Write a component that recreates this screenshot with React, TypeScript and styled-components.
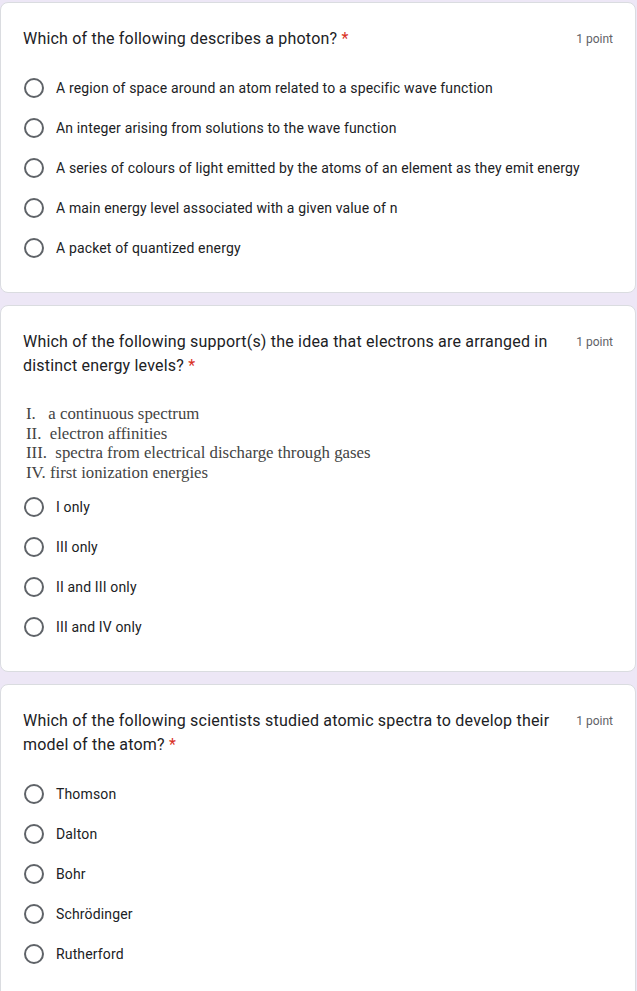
import styled, { createGlobalStyle } from 'styled-components';

type Question = {
  title: string,
  statements?: string[],
  options: string[],
};

const questions: Question[] = [
  {
    title: 'Which of the following describes a photon?',
    options: [
      'A region of space around an atom related to a specific wave function',
      'An integer arising from solutions to the wave function',
      'A series of colours of light emitted by the atoms of an element as they emit energy',
      'A main energy level associated with a given value of n',
      'A packet of quantized energy',
    ],
  },
  {
    title: 'Which of the following support(s) the idea that electrons are arranged in distinct energy levels?',
    statements: [
      'I.   a continuous spectrum',
      'II.  electron affinities',
      'III.  spectra from electrical discharge through gases',
      'IV. first ionization energies',
    ],
    options: ['I only', 'III only', 'II and III only', 'III and IV only'],
  },
  {
    title: 'Which of the following scientists studied atomic spectra to develop their model of the atom?',
    options: ['Thomson', 'Dalton', 'Bohr', 'Schrödinger', 'Rutherford'],
  },
];

const GlobalStyle = createGlobalStyle`
  body {
    margin: 0;
    background: #ede7f6;
    font-family: Roboto, "Liberation Sans", Arial, sans-serif;
    color: #202124;
  }
`;

const Page = styled.div`
  display: flex;
  flex-direction: column;
  gap: 12px;
  padding: 2px 1px 0 0;
`;

const Card = styled.section`
  background: #fff;
  border: 1px solid #dadce0;
  border-radius: 8px;
  padding: 24px 22px 24px 22px;
`;

const Header = styled.div`
  display: flex;
  justify-content: space-between;
  align-items: flex-start;
  gap: 24px;
`;

const Title = styled.div`
  font-size: 16px;
  line-height: 24px;
  letter-spacing: 0.2px;
  max-width: 540px;
`;

const Required = styled.span`
  color: #d93025;
`;

const Points = styled.div`
  font-size: 12px;
  line-height: 24px;
  color: #5f6368;
  white-space: nowrap;
`;

const Statements = styled.div`
  margin-top: 26px;
  padding-left: 3px;
  font-family: "Liberation Serif", "Times New Roman", serif;
  font-size: 16.8px;
  line-height: 19.7px;
  color: #444;
  white-space: pre;
`;

const Options = styled.div<{ $top: number }>`
  display: flex;
  flex-direction: column;
  margin-top: ${(p) => p.$top}px;
`;

const Option = styled.label`
  display: flex;
  align-items: center;
  gap: 12px;
  height: 40px;
  font-size: 14px;
  letter-spacing: 0.15px;
`;

const Radio = styled.span`
  box-sizing: border-box;
  width: 20px;
  height: 20px;
  border: 2px solid #5f6368;
  border-radius: 50%;
  margin-left: 1px;
  flex-shrink: 0;
`;

function App() {
  return (
    <Page>
      <GlobalStyle />
      {questions.map((q) => (
        <Card key={q.title}>
          <Header>
            <Title>
              {q.title}
              {' '}
              <Required>*</Required>
            </Title>
            <Points>1 point</Points>
          </Header>
          {q.statements && (
            <Statements>
              {q.statements.map((s) => (
                <div key={s}>{s}</div>
              ))}
            </Statements>
          )}
          <Options $top={q.statements ? 4 : 17}>
            {q.options.map((o) => (
              <Option key={o}>
                <Radio />
                {o}
              </Option>
            ))}
          </Options>
        </Card>
      ))}
    </Page>
  );
}

export default App;
